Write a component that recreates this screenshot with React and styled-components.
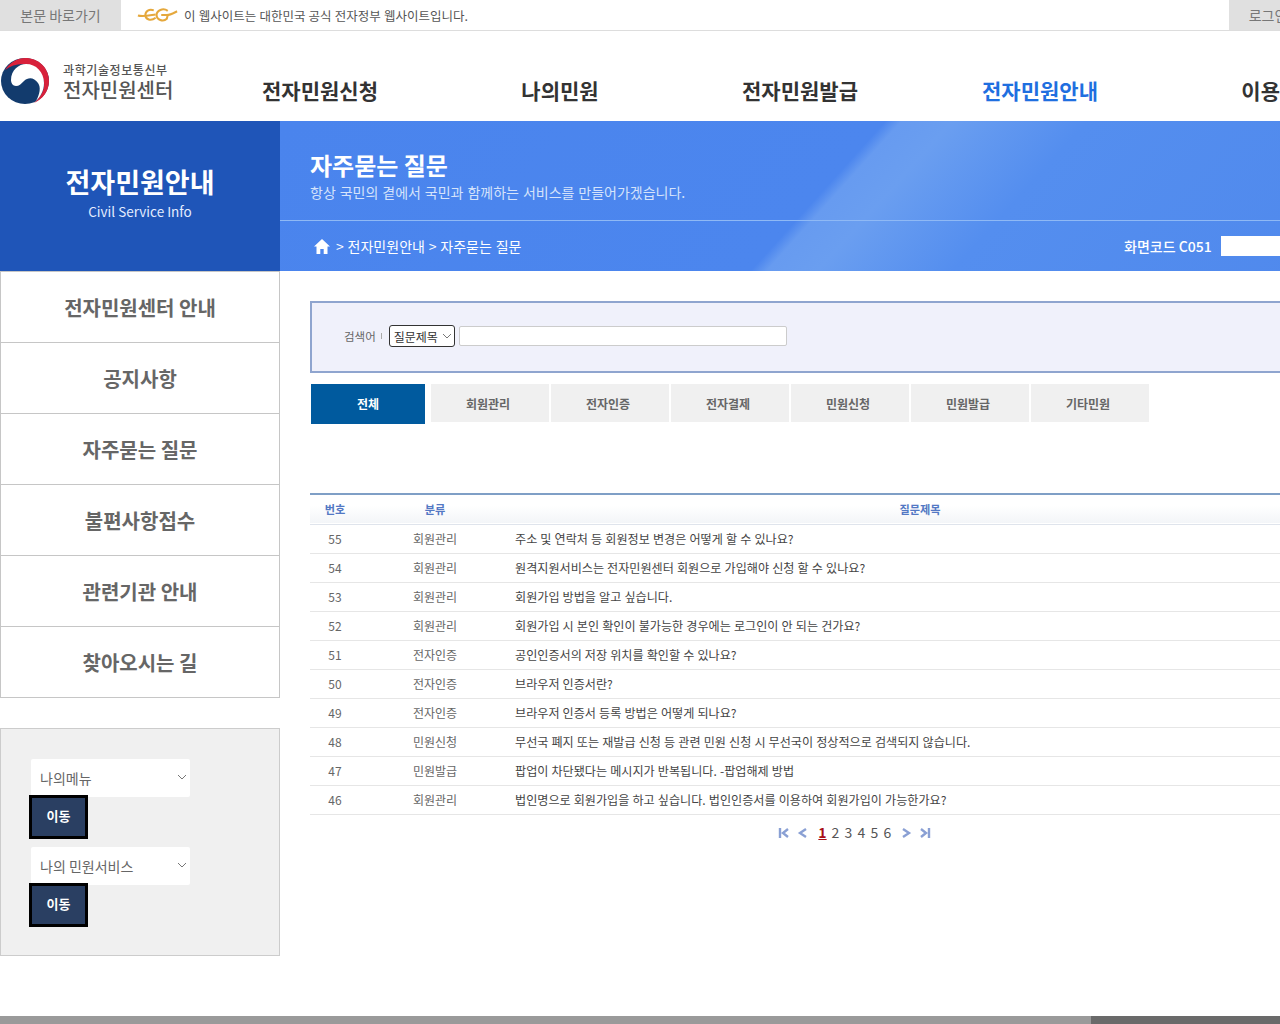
import React from 'react';
import styled, { createGlobalStyle } from 'styled-components';

const GlobalStyle = createGlobalStyle`
  html, body {
    margin: 0;
    padding: 0;
    height: 1024px;
    overflow: hidden;
    background: #fff;
  }

  body, select, input, button {
    font-family: 'Noto Sans CJK KR', 'Noto Sans', sans-serif;
  }
`;

const Page = styled.div`
  width: 1400px;
`;

const TopBar = styled.div`
  display: flex;
  align-items: stretch;
  height: 30px;
  border-bottom: 1px solid #ddd;
`;

const TopLink = styled.a`
  display: flex;
  align-items: center;
  justify-content: center;
  width: ${(p) => p.$width}px;
  background: #e0e0e0;
  color: #777;
  font-size: 14px;
`;

const Notice = styled.div`
  width: 1108px;
  padding-left: 16px;
  box-sizing: border-box;
  display: flex;
  align-items: center;
  gap: 6px;
  color: #555;
  font-size: 12.5px;
  word-spacing: 0.4px;
`;

const Header = styled.header`
  display: flex;
  height: 90px;
`;

const LogoArea = styled.div`
  width: 200px;
  flex-shrink: 0;
  display: flex;
  gap: 14px;
  padding: 27px 0 0 1px;
  box-sizing: border-box;
`;

const LogoText = styled.div`
  padding-top: 5px;
  color: #555;
  white-space: nowrap;
`;

const Ministry = styled.div`
  margin-bottom: 1px;
  font-size: 12px;
  line-height: 14px;
  font-weight: 500;
  letter-spacing: 0.6px;
`;

const CenterName = styled.div`
  font-size: 20px;
  line-height: 24px;
  font-weight: 500;
`;

const Nav = styled.nav`
  display: flex;
`;

const NavItem = styled.a`
  width: 240px;
  padding-top: 43px;
  line-height: 32px;
  text-align: center;
  font-size: 21px;
  font-weight: 700;
  color: ${(p) => (p.$active ? '#1f6fe0' : '#333')};
`;

const Hero = styled.section`
  display: flex;
  height: 150px;
`;

const HeroSide = styled.div`
  width: 280px;
  display: flex;
  flex-direction: column;
  align-items: center;
  padding-top: 42px;
  box-sizing: border-box;
  background: #1f55b8;
  color: #fff;
`;

const HeroSideTitle = styled.div`
  font-size: 27px;
  line-height: 38px;
  font-weight: 700;
`;

const HeroSideSub = styled.div`
  font-size: 13.5px;
  line-height: 20px;
  color: #e4edff;
`;

const HeroMain = styled.div`
  flex: 1;
  background: linear-gradient(
    132deg,
    #4a84ed 0,
    #4c86ee 450px,
    #679bf0 462px,
    #6a9ef0 500px,
    #548eef 600px,
    #4f88ec 100%
  );
  color: #fff;
`;

const HeroHead = styled.div`
  height: 100px;
  padding: 27px 0 0 30px;
  box-sizing: border-box;
  border-bottom: 1px solid #8fb9f5;
`;

const HeroTitle = styled.h2`
  margin: 0;
  font-size: 24px;
  line-height: 34px;
  font-weight: 700;
`;

const HeroText = styled.p`
  margin: 0;
  font-size: 14px;
  line-height: 20px;
  word-spacing: 0.8px;
  color: #d5e3fb;
`;

const CrumbBar = styled.div`
  display: flex;
  align-items: center;
  height: 50px;
  padding-left: 34px;
  font-size: 14px;
  word-spacing: 0.7px;
`;

const Crumbs = styled.div`
  width: 810px;
  display: flex;
  align-items: center;
  gap: 6px;
`;

const ScreenCode = styled.div`
  font-weight: 500;
  margin-right: 9px;
  word-spacing: 0;
`;

const CodeBox = styled.div`
  width: 139px;
  height: 20px;
  background: #fff;
`;

const Body = styled.div`
  display: flex;
  min-height: 745px;
`;

const Sidebar = styled.aside`
  width: 280px;
`;

const SideMenu = styled.ul`
  list-style: none;
  margin: 0 0 30px;
  padding: 0;
  border: 1px solid #c6c6c6;
  border-bottom: 0;
`;

const SideItem = styled.li`
  height: 70px;
  display: flex;
  align-items: center;
  justify-content: center;
  border-bottom: 1px solid #c6c6c6;
  color: #666;
  font-size: 20px;
  font-weight: 700;
`;

const QuickPanel = styled.div`
  height: 228px;
  padding: 30px 0 0 30px;
  box-sizing: border-box;
  border: 1px solid #ccc;
  background: #f0f0f0;
`;

const QuickSelect = styled.div`
  position: relative;
  width: 159px;
  height: 38px;
  padding-left: 9px;
  box-sizing: border-box;
  display: flex;
  align-items: center;
  background: #fff;
  border-radius: 2px;
  color: #666;
  font-size: 14px;

  svg {
    position: absolute;
    right: 3px;
    top: 15px;
  }
`;

const MoveButton = styled.button`
  display: block;
  width: 59px;
  height: 44px;
  margin: -2px 0 8px -2px;
  padding: 0 0 3px;
  position: relative;
  border: 3px solid #000;
  background: #2a3f62;
  color: #fff;
  font-size: 13px;
  font-weight: 700;
`;

const Main = styled.main`
  width: 1020px;
  margin-left: 30px;
  padding-top: 30px;
`;

const SearchBox = styled.form`
  height: 72px;
  padding: 0 0 2px 32px;
  box-sizing: border-box;
  display: flex;
  align-items: center;
  border: 2px solid #8fa5cf;
  background: #f0f1fb;
`;

const SearchLabel = styled.label`
  color: #666;
  font-size: 11.5px;
  margin-right: 5px;
`;

const Pipe = styled.span`
  width: 1px;
  height: 6px;
  margin-right: 7px;
  background: #aaa;
`;

const FieldWrap = styled.div`
  position: relative;
  display: flex;
  margin-right: 4px;

  svg {
    position: absolute;
    right: 3px;
    top: 8px;
    pointer-events: none;
  }
`;

const FieldSelect = styled.select`
  width: 66px;
  height: 22px;
  padding: 0 0 0 4px;
  appearance: none;
  border: 1px solid #333;
  border-radius: 3px;
  background: #fff;
  color: #333;
  font-size: 12px;
`;

const SearchInput = styled.input`
  width: 328px;
  height: 20px;
  padding: 0;
  box-sizing: border-box;
  border: 1px solid #ccc;
  border-radius: 2px;
  background: #fff;
`;

const Tabs = styled.div`
  display: flex;
  margin: 11px 0 69px;
`;

const Tab = styled.a`
  width: ${(p) => (p.$active ? 114 : 118)}px;
  height: ${(p) => (p.$active ? 40 : 38)}px;
  margin: 0 ${(p) => (p.$active ? 6 : 2)}px 0 ${(p) => (p.$active ? 1 : 0)}px;
  padding: 0 ${(p) => (p.$active ? 0 : 4)}px ${(p) => (p.$active ? 2 : 0)}px 0;
  box-sizing: border-box;
  display: flex;
  align-items: center;
  justify-content: center;
  background: ${(p) => (p.$active ? '#005a9e' : '#f0f0f0')};
  color: ${(p) => (p.$active ? '#fff' : '#666')};
  font-size: 12px;
  font-weight: 700;
`;

const Table = styled.table`
  width: 100%;
  border-collapse: collapse;
  table-layout: fixed;
  border-top: 2px solid #7f9fc6;
`;

const HeadRow = styled.tr`
  height: 30px;
  background: linear-gradient(#fff 40%, #f3f5f8);
  border-bottom: 1px solid #dfe4ec;
`;

const HeadCell = styled.th`
  width: ${(p) => (p.$width ? `${p.$width}px` : 'auto')};
  padding: 0 0 1px;
  color: #5378c4;
  font-size: 11.2px;
  font-weight: 700;
`;

const Row = styled.tr`
  height: 29px;
  border-bottom: 1px solid #e6e6e6;
`;

const Cell = styled.td`
  padding: ${(p) => (p.$title ? '0 0 0 5px' : 0)};
  text-align: ${(p) => (p.$title ? 'left' : 'center')};
  color: ${(p) => (p.$title ? '#444' : '#666')};
  font-size: ${(p) => (p.$title ? '12.1px' : '12px')};
  word-spacing: ${(p) => (p.$title ? '0.4px' : 0)};
`;

const Pager = styled.div`
  display: flex;
  align-items: center;
  justify-content: center;
  height: 36px;
  padding-left: 69px;
  box-sizing: border-box;
  color: #555;
  font-size: 14px;
`;

const PagerIcon = styled.svg`
  width: 12px;
  height: 12px;
  margin: ${(p) => p.$margin};
  fill: none;
  stroke: #8aa0d4;
  stroke-width: 2.4;
`;

const PageNum = styled.a`
  width: 13px;
  margin-top: -2px;
  text-align: center;
  color: ${(p) => (p.$current ? '#a80f16' : '#555')};
  font-weight: ${(p) => (p.$current ? 700 : 400)};
  text-decoration: ${(p) => (p.$current ? 'underline' : 'none')};
`;

const Footer = styled.footer`
  display: flex;
  height: 60px;
  background: #9a9a9a;
`;

const FooterDark = styled.div`
  width: 309px;
  margin-left: 1091px;
  background: #6a6a6a;
`;

const navItems = ['전자민원신청', '나의민원', '전자민원발급', '전자민원안내', '이용안내'];
const sideItems = ['전자민원센터 안내', '공지사항', '자주묻는 질문', '불편사항접수', '관련기관 안내', '찾아오시는 길'];
const tabs = ['전체', '회원관리', '전자인증', '전자결제', '민원신청', '민원발급', '기타민원'];

const faqs = [
  [55, '회원관리', '주소 및 연락처 등 회원정보 변경은 어떻게 할 수 있나요?'],
  [54, '회원관리', '원격지원서비스는 전자민원센터 회원으로 가입해야 신청 할 수 있나요?'],
  [53, '회원관리', '회원가입 방법을 알고 싶습니다.'],
  [52, '회원관리', '회원가입 시 본인 확인이 불가능한 경우에는 로그인이 안 되는 건가요?'],
  [51, '전자인증', '공인인증서의 저장 위치를 확인할 수 있나요?'],
  [50, '전자인증', '브라우저 인증서란?'],
  [49, '전자인증', '브라우저 인증서 등록 방법은 어떻게 되나요?'],
  [48, '민원신청', '무선국 폐지 또는 재발급 신청 등 관련 민원 신청 시 무선국이 정상적으로 검색되지 않습니다.'],
  [47, '민원발급', '팝업이 차단됐다는 메시지가 반복됩니다. -팝업해제 방법'],
  [46, '회원관리', '법인명으로 회원가입을 하고 싶습니다. 법인인증서를 이용하여 회원가입이 가능한가요?'],
];

const EgLogo = () => (
  <svg width="41" height="16" viewBox="0 0 44 16" fill="none" stroke="#e5a83c" strokeWidth="2.2">
    <path d="M1 8.5 C6 10 10 9 20 7.5" />
    <path d="M18 3 C13 1 9 4 9 8 C9 13 15 15 20 11" />
    <path d="M33 3.5 C28 0 21 3 21 8 C21 13 28 16 32 12 L33 8 L26 8" />
    <path d="M32 8 C36 8 39 6 43 4" />
  </svg>
);

const Taegeuk = () => (
  <svg width="48" height="46" viewBox="0 0 48 46">
    <ellipse cx="24" cy="23" rx="24" ry="23" fill="#123b6d" />
    <path d="M4 12 C9 4 17 0 24 0 C38 0 48 10 48 23 C48 33 42 41 33 45 C40 39 44 31 43 24 C41 13 32 6 22 6 C15 6 9 8 4 12 Z" fill="#d8213b" />
    <path d="M10 22 C10 12 18 6 25 6 C35 6 43 14 43 25 C43 33 39 39 35 43 C39 36 40 29 37 25 C33 19 27 19 23 23 C20 26 18 28 15 28 C12 28 10 25 10 22 Z" fill="#fff" />
  </svg>
);

const HomeIcon = () => (
  <svg width="16" height="15" viewBox="0 0 16 15" fill="#fff">
    <path d="M8 0 L16 7.5 L13.5 7.5 L13.5 15 L9.7 15 L9.7 10 L6.3 10 L6.3 15 L2.5 15 L2.5 7.5 L0 7.5 Z" />
  </svg>
);

const Chevron = () => (
  <svg width="10" height="6" viewBox="0 0 10 6" fill="none" stroke="#777" strokeWidth="1">
    <path d="M1 1 L5 5 L9 1" />
  </svg>
);

const App = () => {
  return (
    <Page>
      <GlobalStyle />
      <TopBar>
        <TopLink $width={121}>본문 바로가기</TopLink>
        <Notice>
          <EgLogo />
          이 웹사이트는 대한민국 공식 전자정부 웹사이트입니다.
        </Notice>
        <TopLink $width={78}>로그인</TopLink>
      </TopBar>

      <Header>
        <LogoArea>
          <Taegeuk />
          <LogoText>
            <Ministry>과학기술정보통신부</Ministry>
            <CenterName>전자민원센터</CenterName>
          </LogoText>
        </LogoArea>
        <Nav>
          {navItems.map((item) => (
            <NavItem key={item} $active={item === '전자민원안내'}>{item}</NavItem>
          ))}
        </Nav>
      </Header>

      <Hero>
        <HeroSide>
          <HeroSideTitle>전자민원안내</HeroSideTitle>
          <HeroSideSub>Civil Service Info</HeroSideSub>
        </HeroSide>
        <HeroMain>
          <HeroHead>
            <HeroTitle>자주묻는 질문</HeroTitle>
            <HeroText>항상 국민의 곁에서 국민과 함께하는 서비스를 만들어가겠습니다.</HeroText>
          </HeroHead>
          <CrumbBar>
            <Crumbs>
              <HomeIcon />
              {'> 전자민원안내 > 자주묻는 질문'}
            </Crumbs>
            <ScreenCode>화면코드 C051</ScreenCode>
            <CodeBox />
          </CrumbBar>
        </HeroMain>
      </Hero>

      <Body>
        <Sidebar>
          <SideMenu>
            {sideItems.map((item) => (
              <SideItem key={item}>{item}</SideItem>
            ))}
          </SideMenu>
          <QuickPanel>
            <QuickSelect>나의메뉴<Chevron /></QuickSelect>
            <MoveButton type="button">이동</MoveButton>
            <QuickSelect>나의 민원서비스<Chevron /></QuickSelect>
            <MoveButton type="button">이동</MoveButton>
          </QuickPanel>
        </Sidebar>

        <Main>
          <SearchBox>
            <SearchLabel>검색어</SearchLabel>
            <Pipe />
            <FieldWrap>
              <FieldSelect defaultValue="title">
                <option value="title">질문제목</option>
              </FieldSelect>
              <Chevron />
            </FieldWrap>
            <SearchInput type="text" />
          </SearchBox>

          <Tabs>
            {tabs.map((tab, index) => (
              <Tab key={tab} $active={index === 0}>{tab}</Tab>
            ))}
          </Tabs>

          <Table>
            <thead>
              <HeadRow>
                <HeadCell $width={50}>번호</HeadCell>
                <HeadCell $width={150}>분류</HeadCell>
                <HeadCell>질문제목</HeadCell>
              </HeadRow>
            </thead>
            <tbody>
              {faqs.map(([no, category, title]) => (
                <Row key={no}>
                  <Cell>{no}</Cell>
                  <Cell>{category}</Cell>
                  <Cell $title>{title}</Cell>
                </Row>
              ))}
            </tbody>
          </Table>

          <Pager>
            <PagerIcon viewBox="0 0 12 12" $margin="0 6px 0 0"><path d="M2 1 V11 M10 2 L5 6 L10 10" /></PagerIcon>
            <PagerIcon viewBox="0 0 12 12" $margin="0 8px 0 0"><path d="M10 2 L4 6 L10 10" /></PagerIcon>
            {[1, 2, 3, 4, 5, 6].map((n) => (
              <PageNum key={n} $current={n === 1}>{n}</PageNum>
            ))}
            <PagerIcon viewBox="0 0 12 12" $margin="0 6px 0 7px"><path d="M2 2 L8 6 L2 10" /></PagerIcon>
            <PagerIcon viewBox="0 0 12 12" $margin="0"><path d="M2 2 L7 6 L2 10 M10 1 V11" /></PagerIcon>
          </Pager>
        </Main>
      </Body>

      <Footer>
        <FooterDark />
      </Footer>
    </Page>
  );
};

export default App;
